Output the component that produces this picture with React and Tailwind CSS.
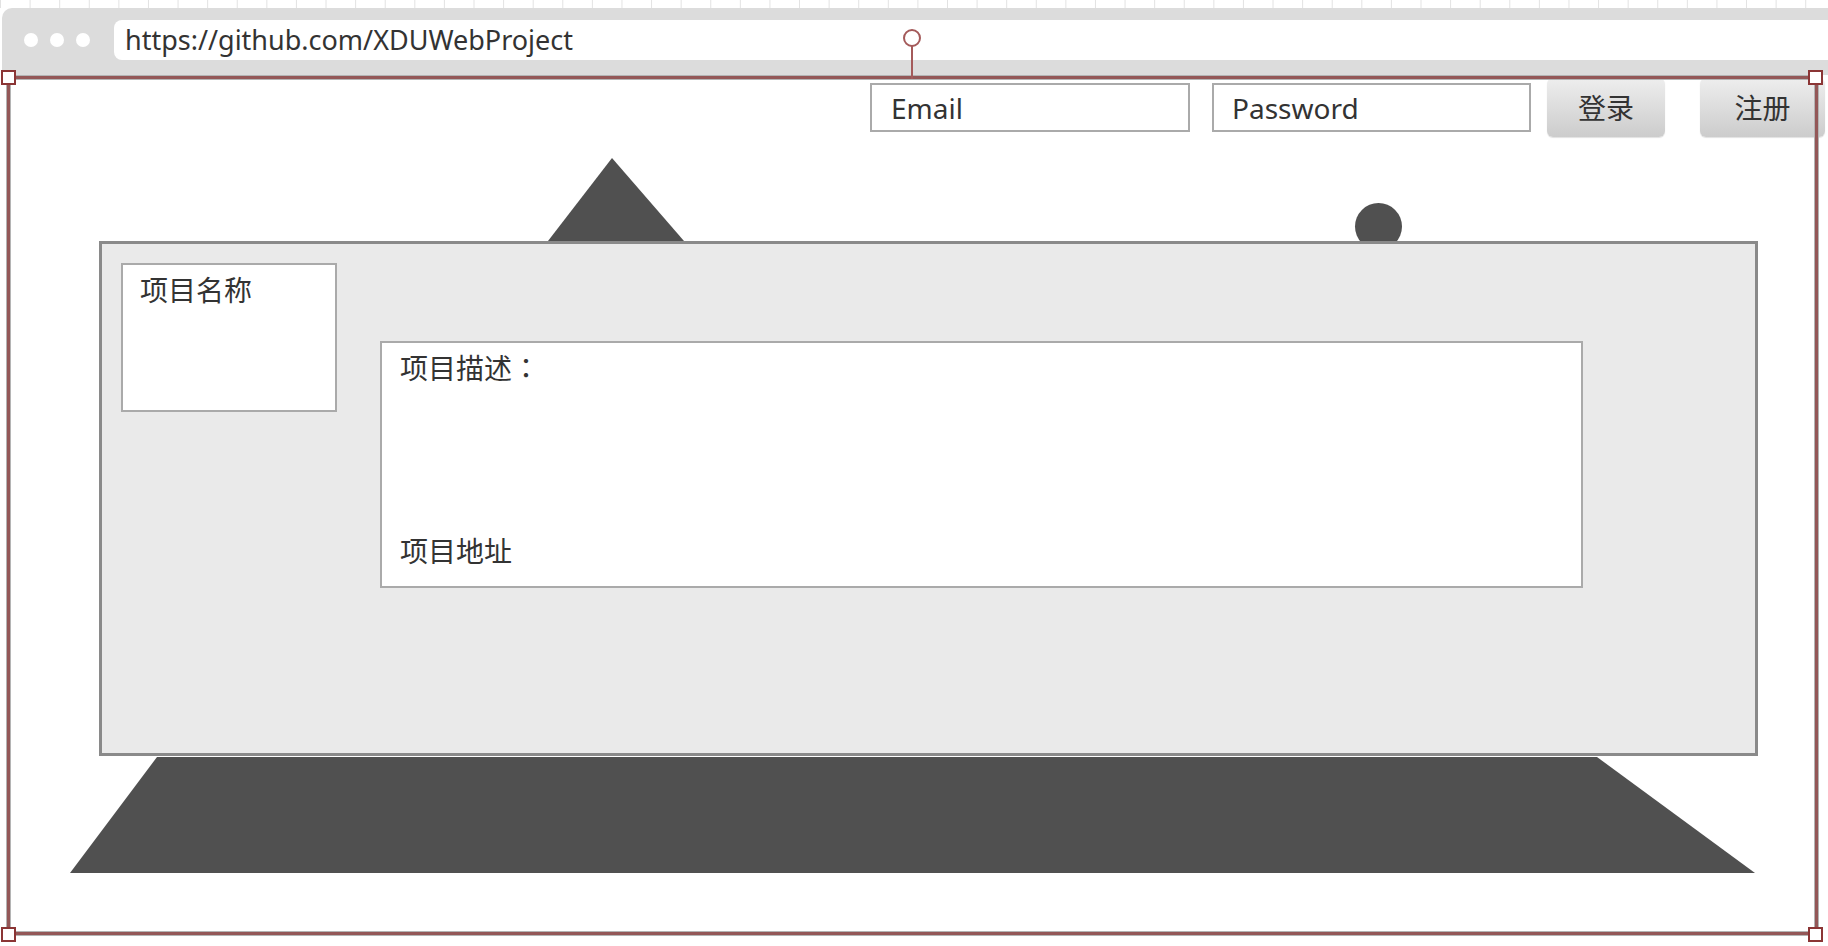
import React from 'react'

const FONT = "font-['Noto_Sans','Noto_Sans_CJK_SC',sans-serif]";

function Chrome() {
  return (
    <div className="ml-[2px] h-[67px] bg-[#dcdcdc] rounded-tl-[10px] flex items-start pt-[12px] pl-[22px]">
      <div className="flex items-center gap-[12px] h-[40px]">
        <span className="w-[14px] h-[14px] rounded-full bg-white" />
        <span className="w-[14px] h-[14px] rounded-full bg-white" />
        <span className="w-[14px] h-[14px] rounded-full bg-white" />
      </div>
      <div className="ml-[24px] flex-1 h-[40px] bg-white rounded-l-[8px] flex items-center pl-[11px] text-[27px] text-[#333]">
        https://github.com/XDUWebProject
      </div>
    </div>
  );
}

function LoginBar() {
  return (
    <div className="flex justify-end items-start pr-[3px] h-[59px]">
      <input
        placeholder="Email"
        className="mt-[5px] w-[320px] h-[49px] border-2 border-[#aaa] bg-white pl-[19px] text-[28px] text-[#333] placeholder:text-[#333] outline-none"
      />
      <input
        placeholder="Password"
        className="ml-[22px] mt-[5px] w-[319px] h-[49px] border-2 border-[#aaa] bg-white pl-[18px] text-[28px] text-[#333] placeholder:text-[#333] outline-none"
      />
      <button className="ml-[16px] w-[118px] h-[59px] rounded-[6px] bg-gradient-to-b from-[#eeeeee] to-[#cccccc] shadow-[0_1px_1px_rgba(0,0,0,0.12)] text-[28px] text-[#333]">
        登录
      </button>
      <button className="ml-[35px] w-[125px] h-[59px] rounded-[6px] bg-gradient-to-b from-[#eeeeee] to-[#cccccc] shadow-[0_1px_1px_rgba(0,0,0,0.12)] text-[28px] text-[#333]">
        注册
      </button>
    </div>
  );
}

function ProjectPanel() {
  return (
    <div className="relative ml-[99px] mt-[104px] w-[1659px]">
      {/* shapes peeking out behind the panel */}
      <svg className="absolute left-[449px] top-[-83px]" width="136" height="83" viewBox="0 0 136 83">
        <polygon points="64,0 136,83 0,83" fill="#505050" />
      </svg>
      <span className="absolute left-[1256px] top-[-38px] w-[47px] h-[47px] rounded-full bg-[#505050]" />

      <div className="relative h-[515px] border-[3px] border-[#8a8a8a] bg-[#eaeaea] p-[19px] flex items-start gap-[43px]">
        <div className="w-[216px] h-[149px] border-2 border-[#aaa] bg-white pl-[17px] pt-[6px] text-[28px] text-[#333] leading-[38px]">
          项目名称
        </div>
        <div className="mt-[78px] w-[1203px] h-[247px] border-2 border-[#aaa] bg-white pl-[18px] pt-[5px] pb-[16px] flex flex-col justify-between text-[28px] text-[#333] leading-[38px]">
          <span>
            项目描述<span className="font-['Noto_Sans_CJK_JP',sans-serif]">：</span>
          </span>
          <span>项目地址</span>
        </div>
      </div>

      <svg className="block ml-[-29px] mt-[1px]" width="1685" height="116" viewBox="0 0 1685 116">
        <polygon points="87,0 1527,0 1685,116 0,116" fill="#505050" />
      </svg>
    </div>
  );
}

export default function App() {
  return (
    <div className={`relative w-[1828px] h-[946px] bg-white overflow-hidden ${FONT}`}>
      <div className="h-[8px] bg-[linear-gradient(90deg,#e2e2e2_1px,transparent_1px)] bg-[length:29.6px_8px]" />
      <Chrome />
      <div className="mt-[3px]">
        <LoginBar />
        <ProjectPanel />
      </div>

      {/* selection frame */}
      <div className="pointer-events-none absolute left-[7px] top-[76px] w-[1811px] h-[859px] border-[3px] border-[#935757] shadow-[0_0_0_1px_#b4b4b4,inset_0_0_0_1px_#b4b4b4]" />
      <span className="absolute left-[1px] top-[70px] w-[15px] h-[15px] border-2 border-[#8b3535] bg-white" />
      <span className="absolute left-[1808px] top-[70px] w-[15px] h-[15px] border-2 border-[#8b3535] bg-white" />
      <span className="absolute left-[1px] top-[927px] w-[15px] h-[15px] border-2 border-[#8b3535] bg-white" />
      <span className="absolute left-[1808px] top-[927px] w-[15px] h-[15px] border-2 border-[#8b3535] bg-white" />

      {/* pin */}
      <svg className="absolute left-[901px] top-[27px]" width="22" height="52" viewBox="0 0 22 52">
        <circle cx="11" cy="11" r="8" fill="white" stroke="#a45a5a" strokeWidth="2" />
        <line x1="11" y1="19" x2="11" y2="52" stroke="#a45a5a" strokeWidth="2" />
      </svg>
    </div>
  );
}
